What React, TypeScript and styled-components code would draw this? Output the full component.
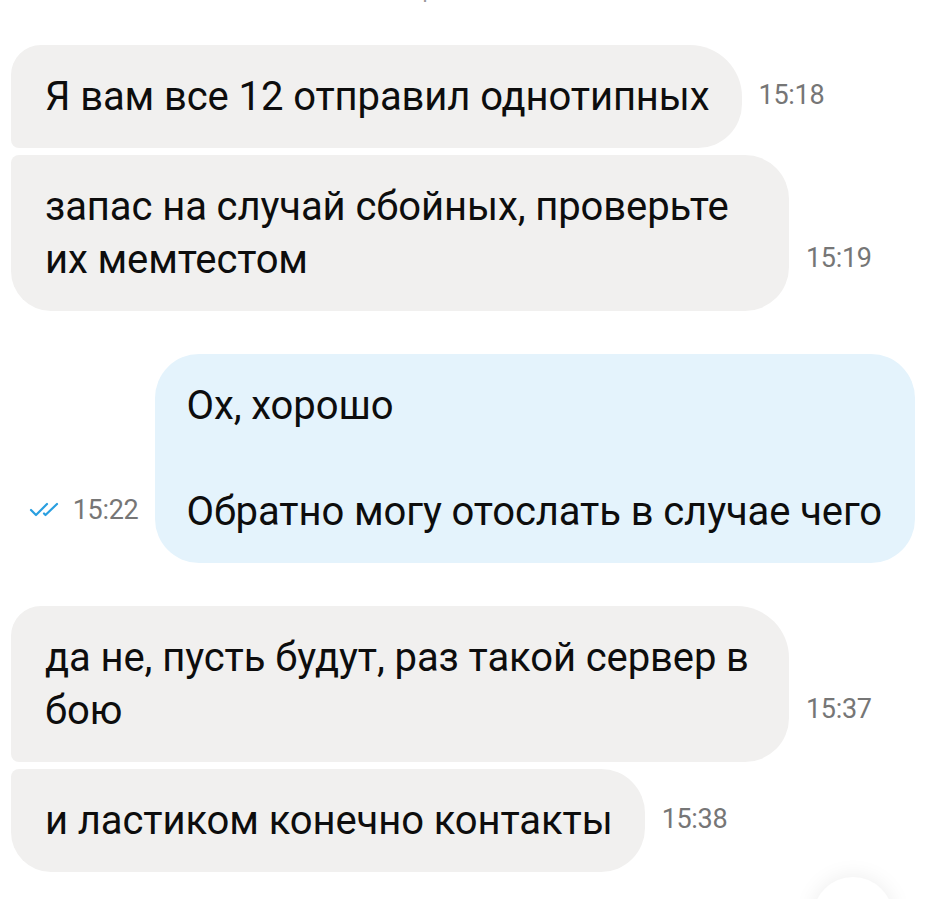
import React from "react";
import styled, { createGlobalStyle } from "styled-components";

const Global = createGlobalStyle`
  html, body { margin: 0; padding: 0; background: #ffffff; }
  body { width: 939px; height: 899px; overflow: hidden; font-family: Roboto, "Noto Sans", sans-serif; }
`;

const Page = styled.div`
  position: relative;
  width: 939px;
  height: 899px;
  overflow: hidden;
  background: #fff;
`;

const DateLine = styled.div`
  margin-top: -22px;
  height: 24px;
  text-align: center;
  font-family: Roboto, sans-serif;
  font-size: 22px;
  color: #9a9a9a;
  line-height: 24px;
  padding-right: 100px;
`;

const Feed = styled.div`
  display: flex;
  flex-direction: column;
  padding: 43px 24px 0 11px;
`;

const Group = styled.div`
  display: flex;
  flex-direction: column;
  gap: 7px;
  margin-bottom: 43px;
`;

const Row = styled.div<{ $out?: boolean }>`
  display: flex;
  align-items: flex-end;
  justify-content: ${(p) => (p.$out ? "flex-end" : "flex-start")};
  gap: 17px;
`;

type Pos = "first" | "last" | "single";

const Bubble = styled.div<{ $out?: boolean; $pos: Pos }>`
  box-sizing: border-box;
  max-width: 778px;
  padding: ${(p) => (p.$out ? "25px 33px 25px 31px" : "25px 32px 25px 34px")};
  background: ${(p) => (p.$out ? "#e4f3fc" : "#f1f0ef")};
  color: #0d0d0d;
  font-family: Roboto, sans-serif;
  font-size: 40px;
  line-height: 53px;
  letter-spacing: -0.1px;
  white-space: pre-wrap;
  border-radius: ${(p) =>
    p.$pos === "first"
      ? "30px 52px 44px 8px"
      : p.$pos === "last"
      ? "8px 44px 44px 40px"
      : "44px"};
`;

const Time = styled.div`
  display: flex;
  align-items: center;
  gap: 12px;
  padding-bottom: 38px;
  font-family: Roboto, sans-serif;
  font-size: 27px;
  line-height: 30px;
  color: #767676;
  letter-spacing: -0.3px;
  white-space: nowrap;
`;

const ScrollButton = styled.div`
  position: absolute;
  left: 813px;
  top: 877px;
  width: 80px;
  height: 80px;
  border-radius: 50%;
  background: #fff;
  box-shadow: 0 0 22px rgba(0, 0, 0, 0.08);
`;

const Ticks = () => (
  <svg width="32" height="16" viewBox="0 0 32 16" fill="none">
    <path d="M2 8 L7 13 L18 2" stroke="#2a9fe0" strokeWidth="2.2" strokeLinecap="round" strokeLinejoin="round" />
    <path d="M15 11.5 L16.5 13 L28 2" stroke="#2a9fe0" strokeWidth="2.2" strokeLinecap="round" strokeLinejoin="round" />
  </svg>
);

export default function App() {
  return (
    <Page>
      <Global />
      <DateLine>20 апреля</DateLine>
      <Feed>
        <Group>
          <Row>
            <Bubble $pos="first">Я вам все 12 отправил однотипных</Bubble>
            <Time>15:18</Time>
          </Row>
          <Row>
            <Bubble $pos="last">запас на случай сбойных, проверьте их мемтестом</Bubble>
            <Time>15:19</Time>
          </Row>
        </Group>
        <Group>
          <Row $out>
            <Time>
              <Ticks />
              15:22
            </Time>
            <Bubble $out $pos="single">{"Ох, хорошо\n\nОбратно могу отослать в случае чего"}</Bubble>
          </Row>
        </Group>
        <Group>
          <Row>
            <Bubble $pos="first">да не, пусть будут, раз такой сервер в бою</Bubble>
            <Time>15:37</Time>
          </Row>
          <Row>
            <Bubble $pos="last">и ластиком конечно контакты</Bubble>
            <Time>15:38</Time>
          </Row>
        </Group>
      </Feed>
      <ScrollButton />
    </Page>
  );
}
